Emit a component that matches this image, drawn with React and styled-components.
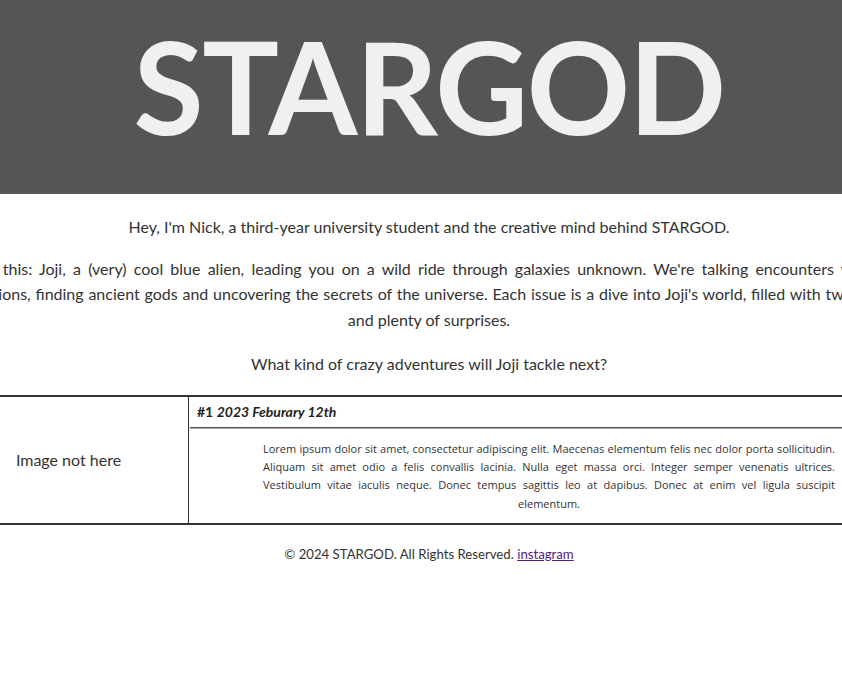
import React from 'react';
import styled, { createGlobalStyle } from 'styled-components';

const GlobalStyle = createGlobalStyle`
  body {
    margin: 0;
    overflow-x: hidden;
    background: #fff;
    font-family: Lato, "Open Sans", sans-serif;
    color: #333;
  }
`;

// the page is a little wider than the window, so everything centres at 429px
const Page = styled.div`
  width: 858px;
  display: flex;
  flex-direction: column;
  align-items: center;
`;

const Header = styled.header`
  width: 100%;
  height: 194px;
  box-sizing: border-box;
  padding-top: 22px;
  background-color: #555;
  display: flex;
  justify-content: center;
`;

const Title = styled.h1`
  margin: 0;
  font-size: 128px;
  line-height: 1;
  font-weight: 700;
  letter-spacing: -1.5px;
  color: #f0f0f0;
`;

const Intro = styled.section`
  width: 966px;
  padding-top: 4px;
  font-size: 16px;
  line-height: 1.6;
`;

const Paragraph = styled.p`
  margin: ${(p) => (p.$last ? '19px 0 16px' : '16px 0')};
  text-align: ${(p) => (p.$justify ? 'justify' : 'center')};
  text-align-last: center;
`;

const Issue = styled.div`
  width: 960px;
  margin-top: 2px;
  display: grid;
  grid-template-columns: 240px 1fr;
  border-top: 2px solid #333;
  border-bottom: 2px solid #333;
`;

const Cover = styled.div`
  border-right: 1px solid #333;
  display: flex;
  align-items: center;
  justify-content: center;
  font-size: 16px;
`;

const Entry = styled.div`
  display: flex;
  flex-direction: column;
`;

const EntryTitle = styled.h3`
  margin: 0 0 0 1px;
  padding: 7px 7px 7px;
  font-size: 14px;
  line-height: 1.2;
  font-weight: 700;
  color: #222;
  border-bottom: 1px solid #aaa;
  box-shadow: inset 0 -1px 0 #555;

  em {
    font-style: italic;
  }
`;

const EntryText = styled.p`
  width: 572px;
  margin: 11px auto 10px;
  font-family: "Open Sans", Lato, sans-serif;
  font-size: 11px;
  line-height: 1.66;
  text-align: justify;
  text-align-last: center;
`;

const Footer = styled.footer`
  padding: 21px 0;
  font-size: 13.2px;
  text-align: center;

  a {
    color: #551a8b;
  }
`;

export default function App() {
  return (
    <Page>
      <GlobalStyle />
      <Header>
        <Title>STARGOD</Title>
      </Header>
      <Intro>
        <Paragraph>
          Hey, I'm Nick, a third-year university student and the creative mind behind STARGOD.
        </Paragraph>
        <Paragraph $justify>
          Picture this: Joji, a (very) cool blue alien, leading you on a wild ride through galaxies
          unknown. We're talking encounters with alien civilizations, finding ancient gods and
          uncovering the secrets of the universe. Each issue is a dive into Joji's world, filled
          with twists, turns and plenty of surprises.
        </Paragraph>
        <Paragraph $last>What kind of crazy adventures will Joji tackle next?</Paragraph>
      </Intro>
      <Issue>
        <Cover>Image not here</Cover>
        <Entry>
          <EntryTitle>
            #1 <em>2023 Feburary 12th</em>
          </EntryTitle>
          <EntryText>
            Lorem ipsum dolor sit amet, consectetur adipiscing elit. Maecenas elementum felis nec
            dolor porta sollicitudin. Aliquam sit amet odio a felis convallis lacinia. Nulla eget
            massa orci. Integer semper venenatis ultrices. Vestibulum vitae iaculis neque. Donec
            tempus sagittis leo at dapibus. Donec at enim vel ligula suscipit elementum.
          </EntryText>
        </Entry>
      </Issue>
      <Footer>
        © 2024 STARGOD. All Rights Reserved. <a href="#instagram">instagram</a>
      </Footer>
    </Page>
  );
}
